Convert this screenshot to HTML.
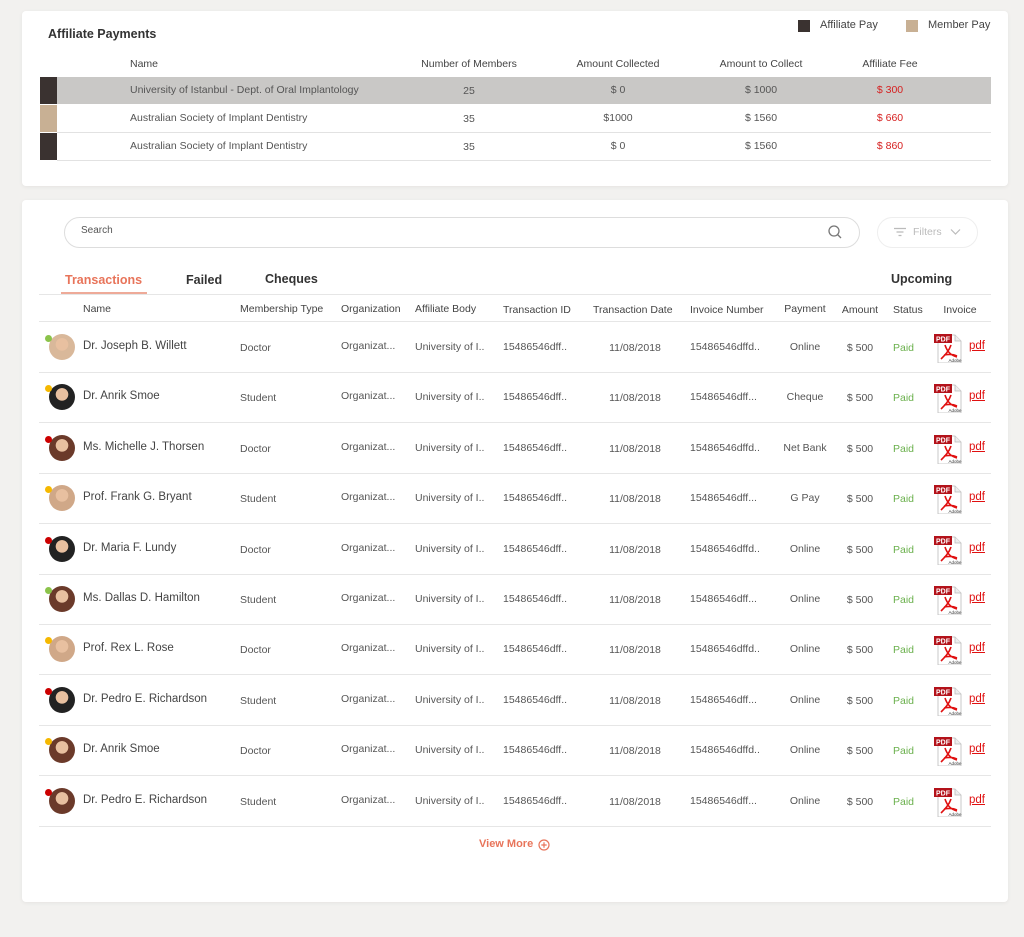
<!DOCTYPE html>
<html><head><style>
*{margin:0;padding:0;box-sizing:border-box}
body{width:1024px;height:937px;background:#f2f1ef;font-family:"Liberation Sans",sans-serif;color:#555;position:relative;overflow:hidden}
.card{position:absolute;background:#fff;border-radius:4px;box-shadow:0 1px 4px rgba(0,0,0,.06)}
.a{position:absolute;white-space:nowrap}
.c{transform:translateX(-50%)}
</style></head><body>
<div class="card" style="left:22px;top:11px;width:986px;height:175px">
 <div class="a" style="left:26px;top:16px;font-size:12.5px;font-weight:bold;color:#333">Affiliate Payments</div>
 <div class="a" style="left:776px;top:9px;width:12px;height:12px;background:#3a3230"></div>
 <div class="a" style="left:798px;top:8px;font-size:11px;color:#444">Affiliate Pay</div>
 <div class="a" style="left:884px;top:9px;width:12px;height:12px;background:#c8b094"></div>
 <div class="a" style="left:906px;top:8px;font-size:11px;color:#444">Member Pay</div>
 <div class="a" style="top:47px;left:108px;font-size:10.5px;color:#444">Name</div>
 <div class="a c" style="top:47px;left:447px;font-size:10.5px;color:#444">Number of Members</div>
 <div class="a c" style="top:47px;left:596px;font-size:10.5px;color:#444">Amount Collected</div>
 <div class="a c" style="top:47px;left:739px;font-size:10.5px;color:#444">Amount to Collect</div>
 <div class="a c" style="top:47px;left:868px;font-size:10.5px;color:#444">Affiliate Fee</div>
 <div class="a" style="left:18px;top:66px;width:17px;height:27px;background:#3a3230"></div>
 <div class="a" style="left:35px;top:66px;width:934px;height:27px;background:#c9c8c6"></div>
 <div class="a" style="left:18px;top:94px;width:17px;height:27px;background:#c8b094"></div>
 <div class="a" style="left:35px;top:121px;width:934px;height:1px;background:#e2e2e2"></div>
 <div class="a" style="left:18px;top:122px;width:17px;height:27px;background:#3a3230"></div>
 <div class="a" style="left:35px;top:149px;width:934px;height:1px;background:#e2e2e2"></div>
 <div style="font-size:10.5px;color:#555">
 <div class="a" style="top:73px;left:108px">University of Istanbul - Dept. of Oral Implantology</div><div class="a c" style="top:74px;left:447px">25</div><div class="a c" style="top:73px;left:596px">$ 0</div><div class="a c" style="top:73px;left:739px">$ 1000</div><div class="a c" style="top:73px;left:868px;color:#d62020">$ 300</div>
 <div class="a" style="top:101px;left:108px">Australian Society of Implant Dentistry</div><div class="a c" style="top:102px;left:447px">35</div><div class="a c" style="top:101px;left:596px">$1000</div><div class="a c" style="top:101px;left:739px">$ 1560</div><div class="a c" style="top:101px;left:868px;color:#d62020">$ 660</div>
 <div class="a" style="top:129px;left:108px">Australian Society of Implant Dentistry</div><div class="a c" style="top:130px;left:447px">35</div><div class="a c" style="top:129px;left:596px">$ 0</div><div class="a c" style="top:129px;left:739px">$ 1560</div><div class="a c" style="top:129px;left:868px;color:#d62020">$ 860</div>
 </div>
</div>

<div class="card" style="left:22px;top:200px;width:986px;height:702px" id="c2">
 <div class="a" style="left:42px;top:17px;width:796px;height:31px;border:1px solid #ddd;border-radius:16px"></div>
 <div class="a" style="left:59px;top:25px;font-size:10px;color:#555">Search</div>
 <svg class="a" style="left:805px;top:24px" width="16" height="16" viewBox="0 0 16 16"><circle cx="7" cy="7" r="5" fill="none" stroke="#777" stroke-width="1.3"/><path d="M10.5 10.5L14 14" stroke="#777" stroke-width="1.3"/></svg>
 <div class="a" style="left:855px;top:17px;width:101px;height:31px;border:1px solid #eee;border-radius:16px"></div>
 <svg class="a" style="left:871px;top:27px" width="14" height="10"><path d="M1 1.5h12M3.5 5h7M5.5 8.5h3" stroke="#bbb" stroke-width="1.2"/></svg>
 <div class="a" style="left:891px;top:26px;font-size:10.5px;color:#bbb">Filters</div>
 <svg class="a" style="left:928px;top:28px" width="11" height="8"><path d="M1 1.5l4.5 4.5 4.5-4.5" fill="none" stroke="#bbb" stroke-width="1.2"/></svg>
 <div class="a" style="left:43px;top:73px;font-size:12.5px;font-weight:bold;color:#e8745a">Transactions</div>
 <div class="a" style="left:39px;top:92px;width:86px;height:2px;background:#eeaa98"></div>
 <div class="a" style="left:164px;top:73px;font-size:12.5px;font-weight:bold;color:#333">Failed</div>
 <div class="a" style="left:243px;top:72px;font-size:12.5px;font-weight:bold;color:#333">Cheques</div>
 <div class="a" style="left:869px;top:72px;font-size:12.5px;font-weight:bold;color:#333">Upcoming</div>
 <div class="a" style="left:17px;top:94px;width:952px;height:1px;background:#e6e6e6"></div>
 <div style="font-size:10.5px;color:#444">
 <div class="a" style="top:103px;left:61px">Name</div>
 <div class="a" style="top:103px;left:218px">Membership Type</div>
 <div class="a" style="top:103px;left:319px">Organization</div>
 <div class="a" style="top:103px;left:393px">Affiliate Body</div>
 <div class="a" style="top:104px;left:481px">Transaction ID</div>
 <div class="a" style="top:104px;left:571px">Transaction Date</div>
 <div class="a" style="top:104px;left:668px">Invoice Number</div>
 <div class="a c" style="top:103px;left:783px">Payment</div>
 <div class="a c" style="top:104px;left:838px">Amount</div>
 <div class="a" style="top:104px;left:871px">Status</div>
 <div class="a c" style="top:104px;left:938px">Invoice</div>
 </div>
 <div class="a" style="left:17px;top:121px;width:952px;height:1px;background:#e6e6e6"></div>
 <div id="rows"></div>
 <div class="a" style="left:457px;top:638px;font-size:11px;font-weight:bold;color:#e8745a">View More</div>
 <svg class="a" style="left:516px;top:639px" width="12" height="12"><circle cx="6" cy="6" r="5" fill="none" stroke="#e8745a" stroke-width="1.2"/><path d="M6 3.3v5.4M3.3 6h5.4" stroke="#e8745a" stroke-width="1.2"/></svg>
</div>
<script>
var d=[["Dr.","Joseph B. Willett","Doctor","15486546dffd..","Online","#8bc34a","#d9b89a"],
["Dr.","Anrik Smoe","Student","15486546dff...","Cheque","#f5b800","#222"],
["Ms.","Michelle J. Thorsen","Doctor","15486546dffd..","Net Bank","#c00","#6b3a2a"],
["Prof.","Frank G. Bryant","Student","15486546dff...","G Pay","#f5b800","#d0a888"],
["Dr.","Maria F. Lundy","Doctor","15486546dffd..","Online","#c00","#222"],
["Ms.","Dallas D. Hamilton","Student","15486546dff...","Online","#8bc34a","#6b3a2a"],
["Prof.","Rex L. Rose","Doctor","15486546dffd..","Online","#f5b800","#d0a888"],
["Dr.","Pedro E. Richardson","Student","15486546dff...","Online","#c00","#222"],
["Dr.","Anrik Smoe","Doctor","15486546dffd..","Online","#f5b800","#6b3a2a"],
["Dr.","Pedro E. Richardson","Student","15486546dff...","Online","#c00","#6b3a2a"]];
var pdf='<svg width="32" height="30" viewBox="0 0 32 30"><path d="M5 2h17l6 6v22H5z" fill="#fff" stroke="#bbb" stroke-width=".8"/><path d="M22 2v6h6" fill="#eee" stroke="#bbb" stroke-width=".8"/><rect x="1" y="1" width="18" height="9" fill="#b3121a"/><text x="10" y="8.3" font-size="7" font-family="Liberation Sans" font-weight="bold" fill="#fff" text-anchor="middle">PDF</text><path d="M12 12c2 6 5 10 12 12M8 26c4-4 8-8 10-14M11 22c5-1 9-1 13 1" fill="none" stroke="#e01010" stroke-width="1.6"/><text x="22" y="29" font-size="4.5" font-family="Liberation Sans" fill="#333" text-anchor="middle">Adobe</text></svg>';
var h='';
d.forEach(function(r,i){var y=122+i*50.4;var t=y+20;
h+='<div class="a" style="left:27px;top:'+(y+12)+'px;width:26px;height:26px;border-radius:50%;background:radial-gradient(circle at 50% 40%,#e8c0a0 0 30%,'+r[6]+' 32%)"></div>';
h+='<div class="a" style="left:23px;top:'+(y+13)+'px;width:7px;height:7px;border-radius:50%;background:'+r[5]+'"></div>';
h+='<div class="a" style="left:61px;top:'+(t-2)+'px;font-size:11.5px;color:#444">'+r[0]+' '+r[1]+'</div>';
h+='<div class="a" style="left:218px;top:'+t+'px;font-size:10.5px">'+r[2]+'</div>';
h+='<div class="a" style="left:319px;top:'+(t-2)+'px;font-size:10.5px">Organizat...</div>';
h+='<div class="a" style="left:393px;top:'+(t-1)+'px;font-size:10.5px">University of I..</div>';
h+='<div class="a" style="left:481px;top:'+(t-1)+'px;font-size:10.5px">15486546dff..</div>';
h+='<div class="a c" style="left:613px;top:'+t+'px;font-size:10.5px">11/08/2018</div>';
h+='<div class="a" style="left:668px;top:'+(t-1)+'px;font-size:10.5px">'+r[3]+'</div>';
h+='<div class="a c" style="left:783px;top:'+(t-1)+'px;font-size:10.5px">'+r[4]+'</div>';
h+='<div class="a c" style="left:838px;top:'+t+'px;font-size:10.5px">$ 500</div>';
h+='<div class="a" style="left:871px;top:'+t+'px;font-size:10.5px;color:#6ab04c">Paid</div>';
h+='<div class="a" style="left:911px;top:'+(y+11)+'px">'+pdf+'</div>';
h+='<div class="a" style="left:947px;top:'+(t-2)+'px;font-size:11.5px;color:#e01010;text-decoration:underline">pdf</div>';
h+='<div class="a" style="left:17px;top:'+(y+50)+'px;width:952px;height:1px;background:#e6e6e6"></div>';});
document.getElementById('rows').innerHTML=h;
</script>
</body></html>
